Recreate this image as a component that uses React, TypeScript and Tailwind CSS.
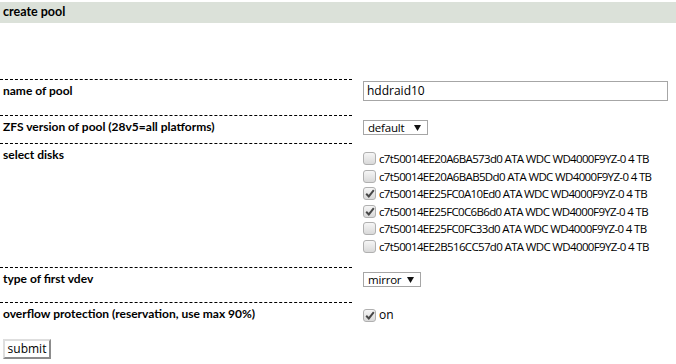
import React from "react";

function Check({ checked }: { checked?: boolean }) {
  return (
    <span className="inline-flex items-center justify-center w-[13px] h-[13px] rounded-[3px] border border-[#b0b0b0] bg-gradient-to-b from-[#f6f6f6] to-[#d9d9d9] shrink-0">
      {checked && (
        <svg width="10" height="9" viewBox="0 0 10 9">
          <path d="M1.2 4.8 L3.8 7.4 L8.8 1.2" fill="none" stroke="#474747" strokeWidth="2" />
        </svg>
      )}
    </span>
  );
}

function Select({ value, width }: { value: string; width: string }) {
  return (
    <div className={`${width} h-[15px] border border-[#a6a6a6] bg-white flex items-center justify-between pl-[4px] pr-[6px] text-[11.5px] tracking-[-0.2px] leading-none text-black font-['Open_Sans']`}>
      <span>{value}</span>
      <svg width="7" height="6" viewBox="0 0 7 6">
        <path d="M0 0 H7 L3.5 6 Z" fill="#111" />
      </svg>
    </div>
  );
}

const disks: [string, boolean][] = [
  ["c7t50014EE20A6BA573d0 ATA WDC WD4000F9YZ-0 4 TB", false],
  ["c7t50014EE20A6BAB5Dd0 ATA WDC WD4000F9YZ-0 4 TB", false],
  ["c7t50014EE25FC0A10Ed0 ATA WDC WD4000F9YZ-0 4 TB", true],
  ["c7t50014EE25FC0C6B6d0 ATA WDC WD4000F9YZ-0 4 TB", true],
  ["c7t50014EE25FC0FC33d0 ATA WDC WD4000F9YZ-0 4 TB", false],
  ["c7t50014EE2B516CC57d0 ATA WDC WD4000F9YZ-0 4 TB", false],
];

function Row({ label, h, children }: { label: string; h: string; children: React.ReactNode }) {
  return (
    <div className={`flex ${h}`}>
      <div className="w-[352px] shrink-0 border-t border-dashed border-black pl-[3px] pt-[4px] font-bold text-[12px] leading-[14px] text-black font-[Lato] whitespace-nowrap">
        {label}
      </div>
      <div className="pl-[11px]">{children}</div>
    </div>
  );
}

export default function App() {
  return (
    <div className="w-[676px] h-[364px] bg-white overflow-hidden font-[Lato]">
      <div className="mt-[2px] h-[21px] bg-[#dbe1d9] flex items-center pl-[3px] font-bold text-[12.5px] text-black">
        create pool
      </div>
      <div className="h-[56px]" />
      <Row label="name of pool" h="h-[36px]">
        <div className="pt-[2px]">
          <div className="w-[305px] h-[20px] border border-[#a6a6a6] bg-white flex items-center pl-[3px] text-[12px] text-black font-['Open_Sans']">
            hddraid10
          </div>
        </div>
      </Row>
      <Row label="ZFS version of pool (28v5=all platforms)" h="h-[28px]">
        <div className="pt-[5px]">
          <Select value="default" width="w-[65px]" />
        </div>
      </Row>
      <Row label="select disks" h="h-[124px]">
        <div className="pt-[7px] flex flex-col">
          {disks.map(([name, c]) => (
            <div key={name} className="h-[17.5px] flex items-center gap-[3px] whitespace-nowrap">
              <Check checked={c} />
              <span className="text-[11.5px] text-black tracking-[-0.65px] font-['Open_Sans']">{name}</span>
            </div>
          ))}
        </div>
      </Row>
      <Row label="type of first vdev" h="h-[35px]">
        <div className="pt-[5px]">
          <Select value="mirror" width="w-[58px]" />
        </div>
      </Row>
      <Row label="overflow protection (reservation, use max 90%)" h="h-[33px]">
        <div className="pt-[4px] flex items-center gap-[3px] text-[12px] text-black font-['Open_Sans']">
          <Check checked />
          <span>on</span>
        </div>
      </Row>
      <div className="pl-[3px]">
        <button className="h-[20px] w-[48px] bg-white border-2 border-t-[#dedede] border-l-[#dedede] border-b-[#8c8c8c] border-r-[#8c8c8c] text-[12px] leading-none text-black font-['Open_Sans']">
          submit
        </button>
      </div>
    </div>
  );
}
